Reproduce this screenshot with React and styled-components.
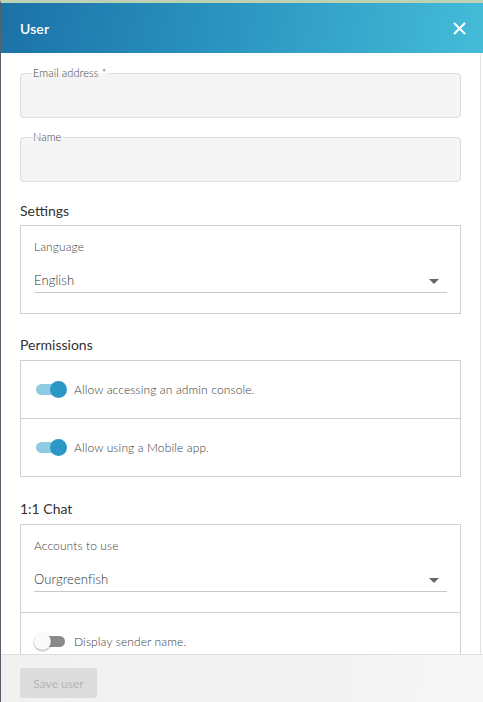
import React from 'react';
import styled, { createGlobalStyle } from 'styled-components';

const GlobalStyle = createGlobalStyle`
  html, body {
    margin: 0;
    padding: 0;
    background: #ffffff;
  }
  body {
    font-family: Lato, "Open Sans", "Liberation Sans", sans-serif;
    font-weight: 300;
    color: #333;
  }
`;

const Frame = styled.div`
  width: 483px;
  height: 702px;
  box-sizing: border-box;
  border-left: 1px solid #56606a;
  border-top: 3px solid #bcd2b3;
  display: flex;
  flex-direction: column;
  overflow: hidden;
  background: #fff;
`;

const Header = styled.div`
  height: 50px;
  flex: none;
  display: flex;
  align-items: center;
  justify-content: space-between;
  padding: 0 16px 0 19px;
  background: linear-gradient(100deg, #1b72a7 0%, #2a93c0 45%, #44bcd8 100%);
  color: #fff;
`;

const Title = styled.h1`
  margin: 0;
  font-size: 14px;
  font-weight: 600;
  letter-spacing: 0.1px;
`;

const CloseButton = styled.button`
  border: 0;
  background: transparent;
  padding: 0;
  width: 16px;
  height: 16px;
  display: flex;
  align-items: center;
  justify-content: center;
  cursor: pointer;
`;

const Scroll = styled.div`
  flex: 1;
  display: flex;
  min-height: 0;
  overflow: hidden;
`;

const Content = styled.div`
  width: 480px;
  box-sizing: border-box;
  padding: 13px 19px 0 19px;
  border-right: 1px solid #e2e2e2;
  display: flex;
  flex-direction: column;
`;

const Field = styled.fieldset`
  margin: ${p => (p.$first ? '0' : '12px')} 0 0 0;
  padding: 0;
  border: 1px solid #dcdcdc;
  border-radius: 4px;
  background: #f5f5f5;
  min-width: 0;
`;

const Legend = styled.legend`
  margin-left: 10px;
  padding: 0 2px;
  font-size: 11px;
  line-height: 14px;
  letter-spacing: 0.1px;
  color: #444;
`;

const FieldInput = styled.div`
  height: 37px;
`;

const SectionTitle = styled.h2`
  margin: ${p => p.$top}px 0 ${p => p.$bottom}px 0;
  font-size: 14px;
  font-weight: 400;
  line-height: 18px;
  color: #333;
`;

const Box = styled.div`
  border: 1px solid #cfcfcf;
  display: flex;
  flex-direction: column;
`;

const SelectBlock = styled.div`
  padding: 13px 13px 20px 13px;
  border-bottom: ${p => (p.$divided ? '1px solid #cfcfcf' : '0')};
`;

const SelectLabel = styled.div`
  font-size: 12px;
  line-height: 16px;
  letter-spacing: 0.1px;
  color: #444;
`;

const Select = styled.div`
  margin-top: 12px;
  height: 25px;
  border-bottom: 1px solid #c8c8c8;
  display: flex;
  align-items: center;
  justify-content: space-between;
  padding: 0 8px 0 0;
  font-size: 13px;
  letter-spacing: 0.1px;
  color: #333;
`;

const Caret = styled.span`
  width: 0;
  height: 0;
  border-left: 5px solid transparent;
  border-right: 5px solid transparent;
  border-top: 5px solid #666;
  margin-top: 3px;
`;

const ToggleRow = styled.div`
  height: 57px;
  display: flex;
  align-items: center;
  gap: 9px;
  padding-left: 15px;
  font-size: 12px;
  letter-spacing: 0.12px;
  color: #3a3a3a;
  & + & {
    border-top: 1px solid #cfcfcf;
  }
`;

const Track = styled.span`
  position: relative;
  width: 29px;
  height: 11px;
  border-radius: 6px;
  background: ${p => (p.$on ? '#8fcbe2' : '#8a8a8a')};
  flex: none;
`;

const Thumb = styled.span`
  position: absolute;
  top: -3px;
  left: ${p => (p.$on ? '14px' : '-2px')};
  width: 17px;
  height: 17px;
  border-radius: 50%;
  background: ${p => (p.$on ? '#2a97c4' : '#fafafa')};
  box-shadow: ${p => (p.$on ? 'none' : '0 1px 2px rgba(0,0,0,0.35)')};
`;

const Footer = styled.div`
  height: 48px;
  flex: none;
  box-sizing: border-box;
  border-top: 1px solid #dedede;
  background: linear-gradient(100deg, #f1f1f1 0%, #f3f3f3 70%, #f7f7f7 100%);
  padding: 13px 19px 0 19px;
`;

const SaveButton = styled.button`
  width: 77px;
  height: 30px;
  border: 0;
  border-radius: 3px;
  background: #dcdcdc;
  color: #b5b5b5;
  font-family: inherit;
  font-weight: 400;
  font-size: 12px;
`;

const Toggle = ({ on, children }) => (
  <ToggleRow>
    <Track $on={on}>
      <Thumb $on={on} />
    </Track>
    <span>{children}</span>
  </ToggleRow>
);

export default function App() {
  return (
    <>
      <GlobalStyle />
      <Frame>
        <Header>
          <Title>User</Title>
          <CloseButton aria-label="Close">
            <svg width="13" height="13" viewBox="0 0 13 13">
              <path d="M1 1 L12 12 M12 1 L1 12" stroke="#fff" strokeWidth="2" />
            </svg>
          </CloseButton>
        </Header>
        <Scroll>
          <Content>
            <Field $first>
              <Legend>Email address *</Legend>
              <FieldInput />
            </Field>
            <Field>
              <Legend>Name</Legend>
              <FieldInput />
            </Field>

            <SectionTitle $top={20} $bottom={5}>Settings</SectionTitle>
            <Box>
              <SelectBlock>
                <SelectLabel>Language</SelectLabel>
                <Select>
                  English
                  <Caret />
                </Select>
              </SelectBlock>
            </Box>

            <SectionTitle $top={22} $bottom={6}>Permissions</SectionTitle>
            <Box>
              <Toggle on>Allow accessing an admin console.</Toggle>
              <Toggle on>Allow using a Mobile app.</Toggle>
            </Box>

            <SectionTitle $top={23} $bottom={6}>1:1 Chat</SectionTitle>
            <Box>
              <SelectBlock $divided>
                <SelectLabel>Accounts to use</SelectLabel>
                <Select>
                  Ourgreenfish
                  <Caret />
                </Select>
              </SelectBlock>
              <Toggle>Display sender name.</Toggle>
            </Box>
          </Content>
        </Scroll>
        <Footer>
          <SaveButton disabled>Save user</SaveButton>
        </Footer>
      </Frame>
    </>
  );
}
